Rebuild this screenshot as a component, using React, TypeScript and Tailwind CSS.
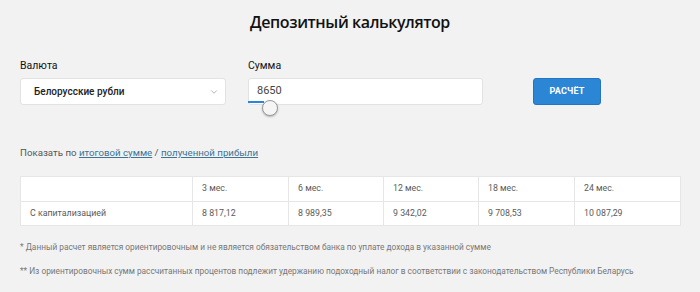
import { ChevronDown } from 'lucide-react'

const periods = ['3 мес.', '6 мес.', '12 мес.', '18 мес.', '24 мес.']
const values = ['8 817,12', '8 989,35', '9 342,02', '9 708,53', '10 087,29']
const colWidths = ['w-[172px]', 'w-[96px]', 'w-[95px]', 'w-[95px]', 'w-[96px]', 'w-[106px]']

export default function App() {
	return (
		<main className="w-[700px] h-[292px] overflow-hidden bg-[#f2f2f2] font-['Roboto',sans-serif] text-[#333]">
			<h1 className="pt-[10px] text-center text-[16px] leading-[24px] font-semibold text-[#111] font-['Open_Sans',sans-serif] tracking-[-0.4px]">
				Депозитный калькулятор
			</h1>

			<section className="mt-[23px] px-5 flex flex-row items-start">
				<div className="w-[206px] flex flex-col">
					<label className="text-[10.5px] leading-[18px] font-normal text-[#111]">Валюта</label>
					<div className="mt-[3px] h-[27px] bg-white border border-[#e2e2e2] rounded-[3px] flex flex-row items-center justify-between pl-[13px] pr-[6px]">
						<span className="text-[10px] font-medium text-[#222]">Белорусские рубли</span>
						<ChevronDown size={10} color="#888" strokeWidth={1.5} />
					</div>
				</div>

				<div className="ml-[22px] w-[235px] flex flex-col">
					<label className="text-[10.5px] leading-[18px] font-normal text-[#111]">Сумма</label>
					<div className="relative mt-[3px] h-[27px] bg-white border border-[#e2e2e2] rounded-[3px] flex flex-row items-center pl-[8px]">
						<span className="text-[11px] text-[#444]">8650</span>
						<div className="absolute left-[-1px] bottom-[1px] w-[16px] h-[2px] bg-[#2b86d6]" />
						<div className="absolute left-[13px] top-[21px] w-[16px] h-[16px] rounded-full bg-[#f5f5f5] border border-[#9a9a9a] shadow-[0_1px_2px_rgba(0,0,0,0.25)]" />
					</div>
				</div>

				<button className="ml-[50px] mt-[21px] w-[68px] h-[27px] rounded-[3px] bg-[#2b86d6] border border-[#2275c0] text-white text-[9px] font-bold tracking-[0.2px]">
					РАСЧЁТ
				</button>
			</section>

			<p className="mt-[41px] px-5 text-[9.7px] leading-[14px] text-[#555]">
				Показать по{' '}
				<span className="underline text-[#3d7394]">итоговой сумме</span>
				{' / '}
				<span className="underline text-[#3d7394]">полученной прибыли</span>
			</p>

			<div className="mt-[16px] px-5">
				<table className="w-[660px] border-collapse bg-white text-[8.8px] text-[#5a5a5a] table-fixed">
					<colgroup>
						{colWidths.map((w, i) => (
							<col key={i} className={w} />
						))}
					</colgroup>
					<tbody>
						<tr className="h-[25px]">
							<td className="border border-[#e6e6e6]" />
							{periods.map((p) => (
								<td key={p} className="border border-[#e6e6e6] pl-[9px]">{p}</td>
							))}
						</tr>
						<tr className="h-[24px]">
							<td className="border border-[#e6e6e6] pl-[9px]">С капитализацией</td>
							{values.map((v) => (
								<td key={v} className="border border-[#e6e6e6] pl-[9px]">{v}</td>
							))}
						</tr>
					</tbody>
				</table>
			</div>

			<div className="mt-[15px] px-5 text-[8.3px] leading-[12px] text-[#777] flex flex-col gap-[12px]">
				<p>* Данный расчет является ориентировочным и не является обязательством банка по уплате дохода в указанной сумме</p>
				<p>** Из ориентировочных сумм рассчитанных процентов подлежит удержанию подоходный налог в соответствии с законодательством Республики Беларусь</p>
			</div>
		</main>
	)
}
